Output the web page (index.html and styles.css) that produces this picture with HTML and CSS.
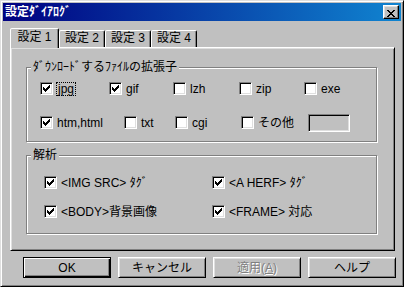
FILE: index.html
```html
<!DOCTYPE html>
<html lang="ja">
<head>
<meta charset="utf-8">
<title>設定ダイアログ</title>
<link rel="stylesheet" href="styles.css">
</head>
<body>
<div class="window">
  <div class="titlebar">
    <span class="title">設定ﾀﾞｲｱﾛｸﾞ</span>
    <button class="close" aria-label="閉じる"><svg width="8" height="7" viewBox="0 0 8 7" shape-rendering="crispEdges"><path d="M0 0h2v1H0zM6 0h2v1H6zM1 1h2v1H1zM5 1h2v1H5zM2 2h4v1H2zM3 3h2v1H3zM2 4h4v1H2zM1 5h2v1H1zM5 5h2v1H5zM0 6h2v1H0zM6 6h2v1H6z"/></svg></button>
  </div>
  <div class="body">
    <div class="tabs">
      <div class="tab active">設定 1</div>
      <div class="tab">設定 2</div>
      <div class="tab">設定 3</div>
      <div class="tab">設定 4</div>
    </div>
    <div class="panel">
      <div class="group g1">
        <span class="legend">ﾀﾞｳﾝﾛｰﾄﾞするﾌｧｲﾙの拡張子</span>
        <div class="row r1">
          <label class="opt"><span class="cb on"></span><span class="lbl focus">jpg</span></label>
          <label class="opt"><span class="cb on"></span><span class="lbl">gif</span></label>
          <label class="opt"><span class="cb"></span><span class="lbl">lzh</span></label>
          <label class="opt"><span class="cb"></span><span class="lbl">zip</span></label>
          <label class="opt"><span class="cb"></span><span class="lbl">exe</span></label>
        </div>
        <div class="row r2">
          <label class="opt"><span class="cb on"></span><span class="lbl">htm,html</span></label>
          <label class="opt"><span class="cb"></span><span class="lbl">txt</span></label>
          <label class="opt"><span class="cb"></span><span class="lbl">cgi</span></label>
          <label class="opt"><span class="cb"></span><span class="lbl">その他</span></label>
          <span class="field"></span>
        </div>
      </div>
      <div class="group g2">
        <span class="legend">解析</span>
        <div class="grid2">
          <label class="opt"><span class="cb on"></span><span class="lbl">&lt;IMG SRC&gt; ﾀｸﾞ</span></label>
          <label class="opt"><span class="cb on"></span><span class="lbl">&lt;A HERF&gt; ﾀｸﾞ</span></label>
          <label class="opt"><span class="cb on"></span><span class="lbl">&lt;BODY&gt;背景画像</span></label>
          <label class="opt"><span class="cb on"></span><span class="lbl">&lt;FRAME&gt; 対応</span></label>
        </div>
      </div>
    </div>
    <div class="buttons">
      <button class="btn default">OK</button>
      <button class="btn">キャンセル</button>
      <button class="btn" disabled>適用(<u>A</u>)</button>
      <button class="btn">ヘルプ</button>
    </div>
  </div>
</div>
</body>
</html>
```

FILE: styles.css
```css
* { box-sizing: border-box; }
html, body { margin: 0; padding: 0; }
body {
  width: 404px;
  height: 287px;
  overflow: hidden;
  background: #c0c0c0;
  font: 12px/14px "Liberation Sans", "Noto Sans CJK JP", sans-serif;
  color: #000;
}
.window {
  width: 404px;
  height: 287px;
  display: flex;
  flex-direction: column;
  background: #c0c0c0;
  border: 1px solid;
  border-color: #dfdfdf #000 #000 #dfdfdf;
  box-shadow: inset 1px 1px #fff, inset -1px -1px #808080;
  padding: 2px;
}
.titlebar {
  height: 18px;
  flex: none;
  display: flex;
  align-items: center;
  justify-content: space-between;
  padding: 0 2px;
  background: linear-gradient(to right, #000080, #1084d0);
}
.title { color: #fff; font-weight: bold; }
.close {
  width: 16px;
  height: 14px;
  margin: 0;
  padding: 3px 0 0 3px;
  border: 1px solid;
  border-color: #fff #000 #000 #fff;
  box-shadow: inset -1px -1px #808080, inset 1px 1px #dfdfdf;
  background: #c0c0c0;
  display: block;
}
.close svg { display: block; }
.body {
  flex: 1;
  display: flex;
  flex-direction: column;
  padding: 7px 0 0 7px;
}
.tabs {
  display: flex;
  align-items: flex-end;
  height: 19px;
  position: relative;
  z-index: 1;
}
.tab {
  width: 46px;
  height: 17px;
  text-align: center;
  line-height: 14px;
  background: #c0c0c0;
  border: 1px solid;
  border-bottom: 0;
  border-color: #fff #000 transparent #fff;
  border-radius: 2px 2px 0 0;
  box-shadow: inset -1px 0 #808080;
}
.tab.active {
  width: 49px;
  height: 20px;
  margin-bottom: -1px;
  line-height: 16px;
}
.panel {
  width: 385px;
  height: 204px;
  border: 1px solid;
  border-color: #fff #000 #000 #fff;
  box-shadow: inset 1px 1px #dfdfdf, inset -1px -1px #808080;
  padding: 19px 0 0 15px;
}
.group {
  position: relative;
  width: 351px;
  border: 1px solid #808080;
  box-shadow: 1px 1px 0 #fff, inset 1px 1px 0 #fff;
}
.legend {
  position: absolute;
  top: -8px;
  left: 4px;
  padding: 0 2px;
  background: #c0c0c0;
  line-height: 14px;
}
.g1 { padding: 11px 0 9px 13px; }
.g2 { margin-top: 13px; padding: 17px 0 12px 17px; }
.row {
  display: grid;
  height: 19px;
  align-items: center;
}
.r1 { grid-template-columns: 69px 64px 66px 65px auto; }
.r2 { grid-template-columns: 84px 51px 66px 67px auto; margin-top: 15px; }
.grid2 {
  display: grid;
  grid-template-columns: 168px auto;
  grid-auto-rows: 19px;
  row-gap: 10px;
  align-items: center;
}
.opt {
  display: flex;
  align-items: center;
  gap: 4px;
  white-space: nowrap;
}
.cb {
  position: relative;
  flex: none;
  width: 13px;
  height: 13px;
  background: #fff;
  border: 1px solid;
  border-color: #808080 #fff #fff #808080;
  box-shadow: inset 1px 1px #000, inset -1px -1px #dfdfdf;
}
.cb.on::after {
  content: "";
  position: absolute;
  left: 2px;
  top: 2px;
  width: 1px;
  height: 1px;
  box-shadow:
    6px 0 #000, 5px 1px #000, 6px 1px #000,
    0 2px #000, 4px 2px #000, 5px 2px #000, 6px 2px #000,
    0 3px #000, 1px 3px #000, 3px 3px #000, 4px 3px #000, 5px 3px #000,
    0 4px #000, 1px 4px #000, 2px 4px #000, 3px 4px #000, 4px 4px #000,
    1px 5px #000, 2px 5px #000, 3px 5px #000,
    2px 6px #000;
}
.focus {
  display: inline-block;
  height: 12px;
  line-height: 12px;
  padding: 0 1px;
  outline: 1px dotted #000;
}
.field {
  width: 42px;
  height: 18px;
  background: #c0c0c0;
  border: 1px solid;
  border-color: #808080 #fff #fff #808080;
  box-shadow: inset 1px 1px #000, inset -1px -1px #dfdfdf;
}
.buttons {
  display: flex;
  gap: 7px;
  margin-top: 6px;
  padding-left: 13px;
}
.btn {
  width: 88px;
  height: 21px;
  margin: 0;
  padding: 0;
  font: inherit;
  color: #000;
  background: #c0c0c0;
  border: 1px solid;
  border-color: #fff #000 #000 #fff;
  box-shadow: inset 1px 1px #dfdfdf, inset -1px -1px #808080;
}
.btn.default {
  border-color: #000;
  box-shadow: inset 1px 1px #fff, inset -1px -1px #000, inset -2px -2px #808080;
}
.btn:disabled {
  color: #808080;
  text-shadow: 1px 1px #fff;
}
```
